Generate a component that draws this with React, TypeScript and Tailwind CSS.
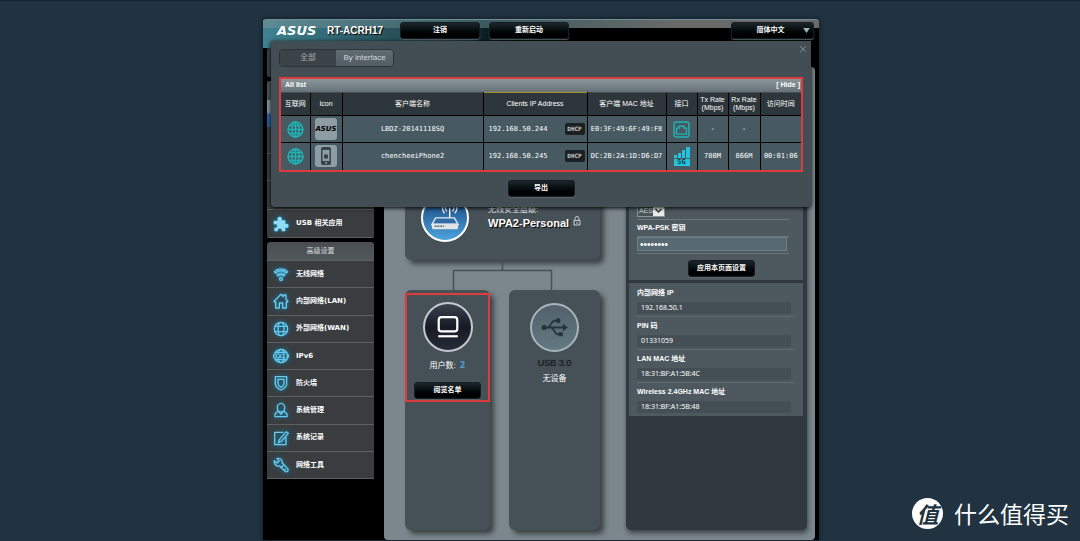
import type { ReactNode } from "react";
import clsx from "clsx";

const sans = "font-['Liberation_Sans','Noto_Sans_CJK_SC',sans-serif]";
const wide = "font-['DejaVu_Sans','Noto_Sans_CJK_SC',sans-serif]";
const mono = "font-['DejaVu_Sans_Mono','Noto_Sans_CJK_SC',monospace]";

const blackButton =
    "rounded-[3px] border border-[#151d21] bg-linear-to-b from-[#1c272b] via-[#060b0d] to-black text-[7px] font-bold text-white shadow-[0_1px_1px_#5b666b] flex items-center justify-center";

const Svg = ({ className, children, size = 16 }: { className?: string; children: ReactNode; size?: number }) => (
    <svg
        xmlns="http://www.w3.org/2000/svg"
        viewBox="0 0 24 24"
        width={size}
        height={size}
        fill="none"
        stroke="currentColor"
        strokeWidth="2"
        strokeLinecap="round"
        strokeLinejoin="round"
        aria-hidden="true"
        className={className}
    >
        {children}
    </svg>
);

const globeLines = (
    <>
        <circle cx="12" cy="12" r="10.5" />
        <ellipse cx="12" cy="12" rx="5" ry="10.5" />
        <path d="M12 1.5v21M1.5 12h21M3.5 6.5h17M3.5 17.5h17" />
    </>
);

const menuItems = [
    {
        label: "无线网络",
        icon: (
            <>
                <path d="M2 8.5c5.5-5.5 14.500-5.500 20 0l-2 2c-4.500-4.500-11.500-4.500-16 0z" />
                <path d="M6 13c3.500-3.200 8.500-3.200 12 0l-1.800 2c-2.500-2.200-5.900-2.200-8.400 0z" />
                <circle cx="12" cy="19.500" r="2.200" />
            </>
        ),
    },
    {
        label: "内部网络(LAN)",
        icon: <path d="M1.500 12.500L12 2l3.500 3.500V3h4v6.500l3 3-1.500 1.500-1-1V22.500h-5.500V15h-5v7.500H4V13l-1 1z" />,
    },
    {
        label: "外部网络(WAN)",
        icon: (
            <>
                <circle cx="12" cy="12" r="10" />
                <ellipse cx="12" cy="12" rx="4.500" ry="10" />
                <path d="M3.500 8h17M3.500 16h17" />
            </>
        ),
    },
    {
        label: "IPv6",
        icon: (
            <>
                <circle cx="12" cy="12" r="10" />
                <ellipse cx="12" cy="12" rx="4.500" ry="10" />
                <path d="M3.500 6.500h17M3.500 17.500h17" />
                <path strokeWidth="5" d="M1.500 12h21" />
                <path stroke="#24566a" strokeWidth="1.500" d="M3 10.500v3M7 13.500v-3h2v1.500H7M12 10.500l1.500 3 1.500-3M20 10.500h-2v3h2V12h-2" />
            </>
        ),
    },
    {
        label: "防火墙",
        icon: (
            <>
                <path d="M3.500 2.500h17V13c0 4.500-4 7.500-8.500 9.500C7.500 20.500 3.500 17.500 3.500 13z" />
                <path d="M7.500 6.500h9V13c0 2.500-2 4-4.500 5.500C9.500 17 7.500 15.500 7.500 13z" />
            </>
        ),
    },
    {
        label: "系统管理",
        icon: (
            <>
                <ellipse cx="12" cy="8.500" rx="5.500" ry="6.500" />
                <path d="M7.500 13.500L3 18v4h18v-4l-4.500-4.500M8.500 14.500l3.500 4 3.500-4" />
            </>
        ),
    },
    {
        label: "系统记录",
        icon: (
            <>
                <path d="M15 3.500H2.500v18.500h17V11" />
                <path d="M20 2.500l3 2.500L13 16.500l-5 3 1.500-5z" />
            </>
        ),
    },
    {
        label: "网络工具",
        icon: (
            <path d="M2 5.500l4 3.500 3-3L6 2.500c4-1.500 8.500 1.500 8 6.500l8 8.500c2 3-1.500 6-4 4L10 13.500C5.500 14.500 1 11 2 5.500zM15 13l-3 3M18 18.500h1" />
        ),
    },
];

const clients = [
    { name: "LBDZ-20141118SQ", ip: "192.168.50.244", mac: "E0:3F:49:6F:49:F8", wired: true, tx: "-", rx: "-", time: "" },
    { name: "chencheeiPhone2", ip: "192.168.50.245", mac: "DC:2B:2A:1D:D6:D7", wired: false, tx: "780M", rx: "866M", time: "00:01:06" },
];

const status = [
    { label: "内部网络 IP", value: "192.168.50.1" },
    { label: "PIN 码", value: "01331059" },
    { label: "LAN MAC 地址", value: "18:31:BF:A1:5B:4C" },
    { label: "Wireless 2.4GHz MAC 地址", value: "18:31:BF:A1:5B:48" },
];

const glow = "text-[#6cc9ea] drop-shadow-[0_0_2px_#0a8fc8]";

const Header = () => (
    <header className="h-[29px] rounded-t-[3px] border-t border-[#6f8f98] bg-linear-to-r from-[#3f8390] from-0% via-[#1c3a41] via-35% to-black to-50% pl-[14px] pr-[5px]">
        <div className="-ml-[14px] -mr-[5px] h-2 bg-linear-to-r from-[#5d8b94] via-[#3b5a60] via-40% to-[#696a68] to-75%" />
        <div className="-mt-[6px] flex items-center">
            <span className={clsx(wide, "w-[50px] text-[13px] leading-4 font-bold italic text-white")}>ASUS</span>
            <h1 className="w-[73px] text-[10px] leading-4 font-bold text-white [text-shadow:1px_1px_1px_#000]">RT-ACRH17</h1>
            <nav className="flex gap-[9px]">
                <button className={clsx(blackButton, "h-[17px] w-20")}>注销</button>
                <button className={clsx(blackButton, "h-[17px] w-20")}>重新启动</button>
            </nav>
            <div className="relative ml-auto w-[83px]">
                <select
                    aria-label="语言"
                    className={clsx(blackButton, "h-[17px] w-full appearance-none pr-1 [text-align-last:center]")}
                >
                    <option>简体中文</option>
                </select>
                <svg viewBox="0 0 8 6" width="7" height="5" className="pointer-events-none absolute top-[6px] right-1 fill-[#9fb3bd]">
                    <path d="M0 0h8L4 6z" />
                </svg>
            </div>
        </div>
    </header>
);

const Sidebar = () => (
    <aside className={clsx(wide, "w-[107px] shrink-0 text-[7px] font-bold text-white")}>
        <div className="h-[29px] rounded-[2px] bg-[#39454a]" />
        <div className="mt-1 overflow-hidden rounded-[2px]">
            <div className="h-[19px] bg-[#4a555a]" />
            <div className="h-[27px] bg-linear-to-b from-[#7f97a8] from-45% to-[#2463a3] to-55%" />
            <div className="h-[27px] border-b border-[#5a6062] bg-[#393d3f]" />
            <div className="h-[27px] border-b border-[#5a6062] bg-[#393d3f]" />
            <div className="h-[29px] border-b border-[#5a6062] bg-[#393d3f]" />
            <a href="#usb" className="flex h-[28px] items-center gap-[7px] border-b border-[#5a6062] bg-[#393d3f] pl-[6px]">
                <Svg className={glow}>
                    <path
                        fill="#8fdcf6"
                        stroke="none"
                        d="M1 7h6.500C5.500 3.500 7.500 1 10 1s4.500 2.500 2.800 5.500H18.500V12c3-1.500 5 .3 5 2.800s-2.300 4.200-5 2.500V23h-5.800c1.500-2.800-.4-4.300-2.400-4.300S6.300 20.300 7.500 23H2v-5.500c3 .8 4.300-.7 4.300-2.600S4.500 11.800 1 13z"
                    />
                </Svg>
                USB 相关应用
            </a>
        </div>
        <div className="mt-1 overflow-hidden rounded-t-[3px]">
            <h2 className="flex h-[19px] items-center justify-center border-b border-[#5a6062] bg-linear-to-b from-[#474d50] to-[#52585b] font-normal text-[#d5d9da]">
                高级设置
            </h2>
            <ul className="flex h-[218px] flex-col bg-[#393d3f]">
                {menuItems.map((item) => (
                    <li key={item.label} className="flex-1 border-b border-[#5a6062]">
                        <a href="#menu" className="flex h-full items-center gap-[7px] pl-[6px]">
                            <Svg className={glow}>{item.icon}</Svg>
                            {item.label}
                        </a>
                    </li>
                ))}
            </ul>
        </div>
    </aside>
);

const NetworkMap = () => (
    <section className="w-[195px] shrink-0">
        <div className="flex h-[183px] items-end rounded-[6px] bg-[#465157] pb-[18px] pl-4 shadow-[4px_4px_5px_#3c4346]">
            <div className="flex size-12 items-center justify-center rounded-full border-2 border-white bg-linear-to-b from-[#14447c] to-[#4ea3dc]">
                <svg viewBox="0 0 32 30" width="30" height="30" className="mb-1">
                    <g fill="none" stroke="#fff" strokeWidth="1.500">
                        <path d="M21 18V6M18 10a5 5 0 0 1 0-7M24 10a5 5 0 0 0 0-7M15.500 12a8 8 0 0 1 0-11M26.500 12a8 8 0 0 0 0-11" />
                    </g>
                    <path d="M6 17h20l4 7H2z" fill="#2f6ba6" stroke="#e3e9ee" strokeWidth="1.500" />
                    <rect x="2" y="23" width="28" height="6" rx="1.500" fill="#dfe4e8" />
                    <path d="M5 26h10" stroke="#56626c" strokeWidth="1.500" strokeDasharray="2 1" />
                </svg>
            </div>
            <div className="mb-3 ml-[19px] text-white">
                <p className="text-[8px] leading-[13px] text-[#e2e6e8]">无线安全层级:</p>
                <p className="flex items-center gap-1 text-[11px] leading-[14px] font-bold [text-shadow:1px_1px_1px_#000]">
                    WPA2-Personal
                    <svg viewBox="0 0 8 10" width="8" height="10" className="mb-1 fill-none stroke-[#c9d0d3]">
                        <path d="M2 4.500V2.500a2 2 0 0 1 4 0v2M1 4.500h6v4.500H1zM4 6v2" />
                    </svg>
                </p>
            </div>
        </div>
        <svg viewBox="0 0 195 30" width="195" height="30" className="block fill-none stroke-[#465157] stroke-[1.5]">
            <path d="M97.500 0v10.500M48.500 30V10.500h98V30" />
        </svg>
        <div className="flex h-60 justify-between">
            <div className="w-[85px] rounded-[6px] bg-[#465157] pt-[3px] shadow-[4px_4px_5px_#3c4346]">
                <div className="flex flex-col items-center border-2 border-[#dd3b3e] pt-[7px] pb-px">
                    <div className="flex size-[50px] items-center justify-center rounded-full border-2 border-[#c3c9cd] bg-linear-to-b from-[#3c4351] via-[#151a24] to-[#262c38]">
                        <svg viewBox="0 0 22 22" width="24" height="24" className="fill-none stroke-white stroke-2">
                            <rect x="2.500" y="2" width="17" height="13" rx="2.500" />
                            <path d="M2 19.500h18" />
                        </svg>
                    </div>
                    <p className="mt-[7px] flex items-center gap-1 text-[8px] leading-[14px] text-white">
                        用户数:
                        <span className={clsx(wide, "font-bold text-[#4f9bd6]")}>2</span>
                    </p>
                    <button className={clsx(blackButton, "mt-[9px] h-[17px] w-[67px]")}>阅览名单</button>
                </div>
            </div>
            <div className="flex w-[91px] flex-col items-center rounded-[6px] bg-[#465157] pt-[13px] shadow-[4px_4px_5px_#3c4346]">
                <div className="flex size-[49px] items-center justify-center rounded-full border-2 border-[#a9b4b9] bg-linear-to-b from-[#51626b] to-[#637983]">
                    <svg viewBox="0 0 26 18" width="27" height="19" className="fill-none stroke-[#27343c] stroke-[1.8]">
                        <path d="M3 9h19M6 9c3 0 4-6.500 7-6.500h2.500M9.500 9c3 0 3.500 6.500 6.500 6.500h2" />
                        <path d="M21 5.500l5 3.500-5 3.500zM17 13.500h4v4h-4z" className="fill-[#27343c] stroke-none" />
                        <circle cx="3" cy="9" r="2.500" className="fill-[#27343c] stroke-none" />
                        <circle cx="16.500" cy="2.500" r="2.300" className="fill-[#27343c] stroke-none" />
                    </svg>
                </div>
                <p className="mt-[5px] text-[9px] leading-[13px] text-[#1b2225] [text-shadow:0_0_1px_#20282c]">USB 3.0</p>
                <p className="mt-[3px] text-[8px] leading-3 text-white">无设备</p>
            </div>
        </div>
    </section>
);

const StatusPanel = () => (
    <section className="min-w-0 flex-1 rounded-[5px] bg-[#2f393e] pr-1 pl-[3px] shadow-[1px_3px_5px_#3c4346]">
        <form className="flex h-[203px] flex-col justify-end bg-[#4d595f] px-2 pb-[3px]" onSubmit={(e) => e.preventDefault()}>
            <div className="relative h-[13px] w-[28px]">
                <select
                    aria-label="WPA 加密"
                    className="block h-full w-full appearance-none border border-[#8a9599] bg-[#475359] pl-px text-[7px] leading-none text-[#d5dadc]"
                >
                    <option>AES</option>
                </select>
                <svg viewBox="0 0 11 11" width="11" height="11" className="pointer-events-none absolute top-px right-px">
                    <path d="M0 0h11v11H0z" fill="#e9ebec" />
                    <path d="M2.500 4l3 3 3-3" fill="none" stroke="#333" strokeWidth="1.500" />
                </svg>
            </div>
            <label
                htmlFor="psk"
                className="mt-[2px] mr-[6px] border-y border-t-[#69757a] border-b-[#69757a] text-[7px] leading-4 font-bold text-white"
            >
                WPA-PSK 密钥
            </label>
            <input
                id="psk"
                type="password"
                defaultValue="password"
                className="mr-2 h-[14px] border border-[#6f8087] bg-[#576a72] px-[2px] text-[10px] leading-none text-white outline-none"
            />
            <div className="mt-[2px] mr-[6px] mb-[6px] border-b border-[#69757a]" />
            <button className={clsx(blackButton, "mr-10 h-[17px] w-[67px] self-end")}>应用本页面设置</button>
        </form>
        <dl className="mt-[3px] bg-[#4d595f] px-2 pt-px">
            {status.map((row) => (
                <div key={row.label} className="border-b border-[#5e6a70] pb-[2px] last:border-transparent">
                    <dt className="text-[7px] leading-[18px] font-bold text-white">{row.label}</dt>
                    <dd className="mr-1 bg-[#434f54] pl-1 font-['Noto_Sans',sans-serif] text-[7px] leading-3 text-white">{row.value}</dd>
                </div>
            ))}
        </dl>
    </section>
);

const cell = "border-r border-black last:border-r-0 p-0 text-center align-middle";

const ClientDialog = () => (
    <div
        role="dialog"
        aria-label="All list"
        className="absolute inset-x-2 top-[22px] flex flex-col rounded-b-[4px] bg-[#434e54] pt-2 pr-2 pb-[10px] pl-2 shadow-[0_1px_4px_#000]"
    >
        <div className="flex items-start">
            <div className="flex h-[18px] overflow-hidden rounded-[4px] border border-[#2c3437] text-[8px] text-[#d3d9dc]">
                <button className="w-14 bg-[#3a4448] text-[#a5adb1]">全部</button>
                <button className="w-[57px] bg-linear-to-b from-[#5f6b71] to-[#525e64]">By interface</button>
            </div>
            <button aria-label="关闭" className="-mt-1 -mr-1 ml-auto text-[#7f8a8f]">
                <Svg size={8}>
                    <path strokeWidth="3" d="M4 4l16 16M20 4L4 20" />
                </Svg>
            </button>
        </div>
        <div className="mt-[10px] border-2 border-[#dd3b3e]">
            <div className="flex h-[13px] items-center justify-between bg-linear-to-b from-[#8b979d] to-[#667278] pr-px pl-1 text-[7px] font-bold text-white">
                <h2>All list</h2>
                <button>[ Hide ]</button>
            </div>
            <table className="w-full table-fixed border-collapse text-white">
                <colgroup>
                    <col className="w-[29px]" />
                    <col className="w-8" />
                    <col />
                    <col className="w-[104px]" />
                    <col className="w-[79px]" />
                    <col className="w-[31px]" />
                    <col className="w-[31px]" />
                    <col className="w-8" />
                    <col className="w-[41px]" />
                </colgroup>
                <thead className="bg-[#2d363a] text-[7px] leading-2">
                    <tr className="h-[23px]">
                        {["互联网", "Icon", "客户端名称", "Clients IP Address", "客户端 MAC 地址", "接口", "Tx Rate (Mbps)", "Rx Rate (Mbps)", "访问时间"].map((title) => (
                            <th key={title} className={clsx(cell, "font-normal", title === "Clients IP Address" && "border-t border-t-[#a8912a]")}>
                                {title}
                            </th>
                        ))}
                    </tr>
                </thead>
                <tbody className={clsx(mono, "bg-[#475a62] text-[7px] leading-3")}>
                    {clients.map((client) => (
                        <tr key={client.mac} className="h-[27px] border-t border-black">
                            <td className={cell}>
                                <Svg size={17} className="mx-auto text-[#1fb3b5]">
                                    {globeLines}
                                </Svg>
                            </td>
                            <td className={cell}>
                                <span className="mx-auto flex size-[22px] items-center justify-center rounded-[3px] bg-[#8e9ca4]">
                                    {client.wired ? (
                                        <span className={clsx(wide, "text-[7px] font-bold italic text-black")}>ASUS</span>
                                    ) : (
                                        <svg viewBox="0 0 12 18" width="12" height="18">
                                            <rect x="1" width="10" height="18" rx="2" fill="#36424a" />
                                            <path d="M2.500 3h7v11h-7z" fill="#8e9ca4" />
                                            <path d="M4 8c1-1 3-1 4 0v3c-1 1-3 1-4 0zM6 6.800l1-1.800" fill="#36424a" />
                                            <circle cx="6" cy="16" r="1" fill="#8e9ca4" />
                                        </svg>
                                    )}
                                </span>
                            </td>
                            <td className={cell}>{client.name}</td>
                            <td className={cell}>
                                <span className="flex items-center justify-between pr-[2px] pl-[5px]">
                                    {client.ip}
                                    <span className="w-5 rounded-[2px] bg-[#1d2022] text-[6px] font-bold text-[#c9cdcf]">DHCP</span>
                                </span>
                            </td>
                            <td className={cell}>{client.mac}</td>
                            <td className={cell}>
                                {client.wired ? (
                                    <Svg size={17} className="mx-auto text-[#1fb3b5]">
                                        <rect x="1.500" y="1.500" width="21" height="21" rx="3" />
                                        <path strokeLinejoin="miter" d="M5 18.500v-8.500h3.500V7.500h7V10H19v8.500z" />
                                    </Svg>
                                ) : (
                                    <span className="mx-auto block w-4">
                                        <svg viewBox="0 0 16 11" width="16" height="11" className="block fill-[#22c3dc]">
                                            <path d="M0 8h3v3H0zM4 6h3v5H4zM8 3h3v8H8zM12 0h4v11h-4z" />
                                        </svg>
                                        <span className="mt-px block bg-[#22c3dc] text-[7px] leading-[7px] font-bold text-[#12363f]">5G</span>
                                    </span>
                                )}
                            </td>
                            <td className={cell}>{client.tx}</td>
                            <td className={cell}>{client.rx}</td>
                            <td className={cell}>{client.time}</td>
                        </tr>
                    ))}
                </tbody>
            </table>
        </div>
        <button className={clsx(blackButton, "mt-2 h-[17px] w-[67px] self-center")}>导出</button>
    </div>
);

const App = () => {
    return (
        <div className={clsx(sans, "relative min-h-screen border-t border-[#16232c] bg-[#213340] pl-[2px]")}>
            <div className="relative mx-auto mt-[18px] max-w-[556px] rounded-t-[3px] bg-black shadow-[0_0_5px_#0d1820]">
                <Header />
                <div className="flex gap-[10px] px-1">
                    <Sidebar />
                    <main className="mt-[19px] flex flex-1 gap-[26px] rounded-[4px] bg-[#7b878c] pt-[10px] pr-2 pb-[10px] pl-[21px]">
                        <NetworkMap />
                        <StatusPanel />
                    </main>
                </div>
                <ClientDialog />
            </div>
            <div className="absolute right-[11px] bottom-3 flex items-center gap-[11px] text-[23px] leading-8 text-white font-['Noto_Sans_CJK_SC',sans-serif]">
                <span className="flex size-[31px] items-center justify-center rounded-full bg-white text-[22px] font-bold italic text-[#213340]">值</span>
                什么值得买
            </div>
        </div>
    );
};

export default App;
